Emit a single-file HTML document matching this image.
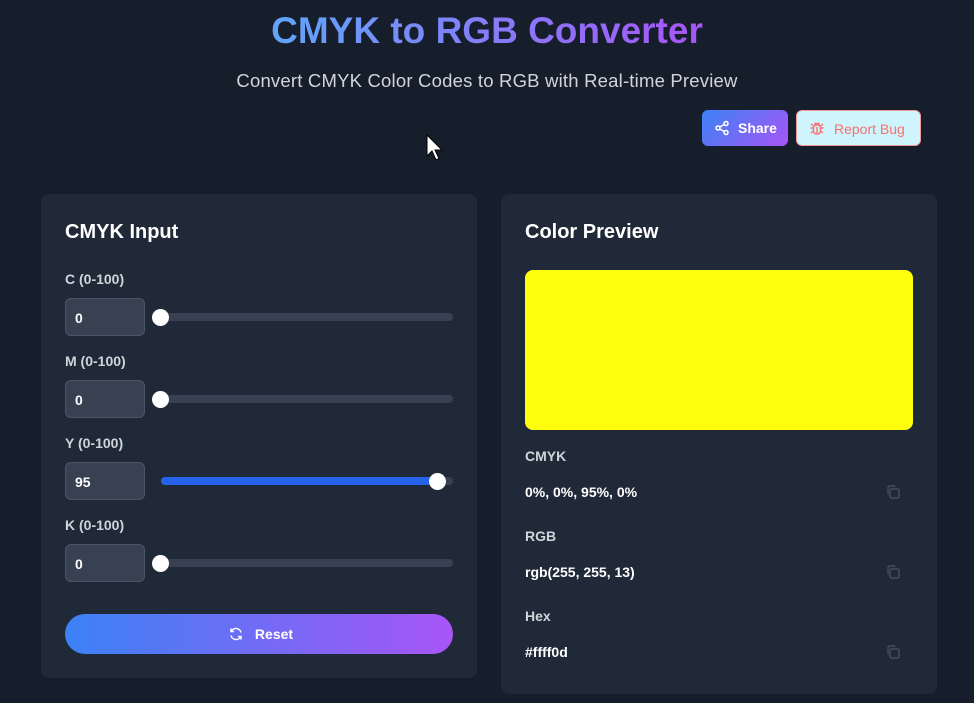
<!DOCTYPE html>
<html><head><meta charset="utf-8"><style>
*{box-sizing:border-box;margin:0;padding:0}
body{width:974px;height:703px;overflow:hidden;background:#171e2b;font-family:"Liberation Sans",sans-serif;position:relative;color:#fff}
.abs{position:absolute}
h1{position:absolute;left:0;width:974px;top:10px;text-align:center;font-size:37px;font-weight:bold;}
h1 span{background:linear-gradient(90deg,#60a5fa,#a855f7);-webkit-background-clip:text;background-clip:text;color:transparent}
.sub{left:0;width:974px;top:70px;text-align:center;font-size:18.5px;letter-spacing:0.2px;color:#d1d5db}
.card{background:#1f2937;border-radius:8px}
.ct{font-size:20px;font-weight:bold;color:#fff}
.lbl{font-size:14px;font-weight:bold;color:#d1d5db}
.inp{width:80px;height:38px;background:#374151;border:1px solid #4b5563;border-radius:6px;font-size:14px;font-weight:bold;padding:11px 9px;color:#fff}
.track{left:161px;width:292px;height:8px;border-radius:4px;background:#374151}
.thumb{width:17px;height:17px;border-radius:50%;background:#fff}
.v{font-size:14px;font-weight:bold;color:#fff}
</style></head><body>
<h1><span>CMYK to RGB Converter</span></h1>
<div class="abs sub">Convert CMYK Color Codes to RGB with Real-time Preview</div>
<div class="abs" style="left:702px;top:110px;width:86px;height:36px;border-radius:6px;background:linear-gradient(135deg,#3b82f6,#a855f7);font-size:14px;font-weight:bold;padding:10px 0 0 36px">Share</div>
<svg class="abs" style="left:714px;top:120px" width="16" height="16" viewBox="0 0 16 16" fill="none" stroke="#fff" stroke-width="1.5"><circle cx="12" cy="3.5" r="2"/><circle cx="4" cy="8" r="2"/><circle cx="12" cy="12.5" r="2"/><path d="M5.8 7 10.2 4.5M5.8 9 10.2 11.5"/></svg>
<div class="abs" style="left:796px;top:110px;width:125px;height:36px;border-radius:6px;background:#cff4fc;border:1px solid #f19a9a;color:#f87171;font-size:14px;padding:10px 0 0 37px">Report Bug</div>
<svg class="abs" style="left:809px;top:120px" width="16" height="16" viewBox="0 0 16 16" fill="none" stroke="#f87171" stroke-width="1.4"><rect x="4.5" y="5" width="7" height="9" rx="3"/><path d="M6 5V3.5h4V5M1.5 8h3M11.5 8h3M2 4l2.5 2M14 4l-2.5 2M2 13l2.5-2M14 13l-2.5-2M8 7v6"/></svg>
<svg class="abs" style="left:426px;top:134px" width="18" height="28" viewBox="0 0 18 28"><path d="M1 1v21l5-5 4 9 3-1.5-4-8.5h7z" fill="#fff" stroke="#000" stroke-width="1"/></svg>

<div class="abs card" style="left:41px;top:194px;width:436px;height:484px"></div>
<div class="abs ct" style="left:65px;top:221px">CMYK Input</div>

<div class="abs lbl" style="left:65px;top:271px">C (0-100)</div>
<div class="abs inp" style="left:65px;top:298px">0</div>
<div class="abs track" style="top:313px"></div><div class="abs thumb" style="left:152px;top:309px"></div>

<div class="abs lbl" style="left:65px;top:353px">M (0-100)</div>
<div class="abs inp" style="left:65px;top:380px">0</div>
<div class="abs track" style="top:395px"></div><div class="abs thumb" style="left:152px;top:391px"></div>

<div class="abs lbl" style="left:65px;top:435px">Y (0-100)</div>
<div class="abs inp" style="left:65px;top:462px">95</div>
<div class="abs track" style="top:477px;background:linear-gradient(90deg,#2563eb 95%,#374151 95%)"></div><div class="abs thumb" style="left:429px;top:473px"></div>

<div class="abs lbl" style="left:65px;top:517px">K (0-100)</div>
<div class="abs inp" style="left:65px;top:544px">0</div>
<div class="abs track" style="top:559px"></div><div class="abs thumb" style="left:152px;top:555px"></div>

<div class="abs" style="left:65px;top:614px;width:388px;height:40px;border-radius:20px;background:linear-gradient(90deg,#3b82f6,#a855f7);font-size:14px;font-weight:bold;text-align:center;padding-top:12px;padding-left:30px">Reset</div>
<svg class="abs" style="left:228px;top:626px" width="16" height="16" viewBox="0 0 16 16" fill="none" stroke="#fff" stroke-width="1.5"><path d="M13 6.5A5.2 5.2 0 0 0 3.2 5.5M3 9.5a5.2 5.2 0 0 0 9.8 1"/><path d="M3 2.5v3h3M13 13.5v-3h-3"/></svg>

<div class="abs card" style="left:501px;top:194px;width:436px;height:500px"></div>
<div class="abs ct" style="left:525px;top:221px">Color Preview</div>
<div class="abs" style="left:525px;top:270px;width:388px;height:160px;border-radius:8px;background:#ffff0d"></div>
<div class="abs lbl" style="left:525px;top:448px">CMYK</div>
<div class="abs v" style="left:525px;top:484px">0%, 0%, 95%, 0%</div>
<div class="abs lbl" style="left:525px;top:528px">RGB</div>
<div class="abs v" style="left:525px;top:564px">rgb(255, 255, 13)</div>
<div class="abs lbl" style="left:525px;top:608px">Hex</div>
<div class="abs v" style="left:525px;top:644px">#ffff0d</div>
<svg class="abs" style="left:885px;top:484px" width="16" height="16" viewBox="0 0 16 16" fill="none" stroke="#4b5563" stroke-width="1.2"><rect x="5" y="5" width="9" height="9" rx="1.5"/><path d="M3 10.5V3.5A1.5 1.5 0 0 1 4.5 2h6"/></svg>
<svg class="abs" style="left:885px;top:564px" width="16" height="16" viewBox="0 0 16 16" fill="none" stroke="#4b5563" stroke-width="1.2"><rect x="5" y="5" width="9" height="9" rx="1.5"/><path d="M3 10.5V3.5A1.5 1.5 0 0 1 4.5 2h6"/></svg>
<svg class="abs" style="left:885px;top:644px" width="16" height="16" viewBox="0 0 16 16" fill="none" stroke="#4b5563" stroke-width="1.2"><rect x="5" y="5" width="9" height="9" rx="1.5"/><path d="M3 10.5V3.5A1.5 1.5 0 0 1 4.5 2h6"/></svg>
</body></html>
